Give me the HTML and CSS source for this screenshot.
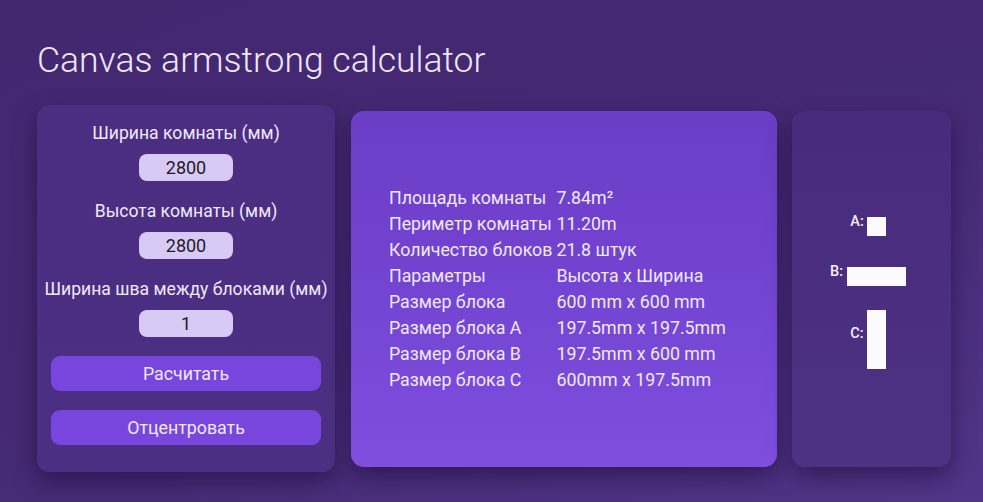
FILE: index.html
```html
<!DOCTYPE html>
<html lang="ru">
<head>
<meta charset="utf-8">
<title>Canvas armstrong calculator</title>
<link rel="stylesheet" href="styles.css">
</head>
<body>
<div class="page">
  <h1 class="title">Canvas armstrong calculator</h1>
  <div class="row">
    <div class="card form-card">
      <div class="label">Ширина комнаты (мм)</div>
      <input class="field" type="text" value="2800">
      <div class="label">Высота комнаты (мм)</div>
      <input class="field" type="text" value="2800">
      <div class="label">Ширина шва между блоками (мм)</div>
      <input class="field field-last" type="text" value="1">
      <button class="btn">Расчитать</button>
      <button class="btn btn-second">Отцентровать</button>
    </div>
    <div class="card result-card">
      <div class="results">
        <div class="cell">Площадь комнаты</div><div class="cell">7.84m²</div>
        <div class="cell">Периметр комнаты</div><div class="cell">11.20m</div>
        <div class="cell">Количество блоков</div><div class="cell">21.8 штук</div>
        <div class="cell">Параметры</div><div class="cell">Высота х Ширина</div>
        <div class="cell">Размер блока</div><div class="cell">600 mm x 600 mm</div>
        <div class="cell">Размер блока А</div><div class="cell">197.5mm x 197.5mm</div>
        <div class="cell">Размер блока В</div><div class="cell">197.5mm x 600 mm</div>
        <div class="cell">Размер блока С</div><div class="cell">600mm x 197.5mm</div>
      </div>
    </div>
    <div class="card preview-card">
      <div class="piece piece-a"><span class="piece-label">A:</span><span class="block block-a"></span></div>
      <div class="piece piece-b"><span class="piece-label">B:</span><span class="block block-b"></span></div>
      <div class="piece piece-c"><span class="piece-label">C:</span><span class="block block-c"></span></div>
    </div>
  </div>
</div>
</body>
</html>
```
FILE: styles.css
```css
html, body {
  margin: 0;
  padding: 0;
}
body {
  min-height: 502px;
  background: linear-gradient(160deg, #432870 0%, #452a74 55%, #513588 100%);
  font-family: Roboto, "Liberation Sans", sans-serif;
  color: #ede6fb;
  overflow: hidden;
}
.page {
  padding: 0 32px 0 37px;
}
.title {
  margin: 41px 0 26px 0;
  font-size: 35.5px;
  line-height: 38px;
  font-weight: 300;
  color: #eee8fa;
  letter-spacing: 0;
}
.row {
  display: flex;
  align-items: center;
}
.card {
  border-radius: 13px;
  box-shadow: 0 10px 22px rgba(22, 8, 52, 0.5);
  box-sizing: border-box;
}
.form-card {
  width: 298px;
  padding: 18px 14px 27px 14px;
  background: linear-gradient(180deg, #4b2e81 0%, #4b2f82 100%);
  display: flex;
  flex-direction: column;
  align-items: center;
}
.label {
  font-size: 17.6px;
  line-height: 20px;
  margin-bottom: 11px;
  color: #efe9fb;
  white-space: nowrap;
}
.field {
  width: 94px;
  height: 27px;
  box-sizing: border-box;
  border: none;
  border-radius: 8px;
  background: #d9c9f5;
  text-align: center;
  font-family: Roboto, "Liberation Sans", sans-serif;
  font-size: 18px;
  color: #1e1b26;
  margin: 0 0 20px 0;
  padding: 0;
  outline: none;
}
.field-last {
  margin-bottom: 19px;
}
.btn {
  width: 270px;
  height: 35px;
  border: none;
  border-radius: 9px;
  background: #7946dd;
  color: #efe8fc;
  font-family: Roboto, "Liberation Sans", sans-serif;
  font-size: 17.8px;
  padding: 0;
  margin: 0;
}
.btn-second {
  margin-top: 19px;
}
.result-card {
  width: 426px;
  height: 356px;
  margin-left: 16px;
  background: linear-gradient(180deg, #6c3dc5 0%, #7444d2 50%, #7f4edf 100%);
  display: flex;
  align-items: center;
  padding-left: 38px;
}
.results {
  display: grid;
  grid-template-columns: auto auto;
  column-gap: 4px;
  font-size: 17.8px;
  line-height: 26px;
  color: #efe9fc;
}
.cell {
  white-space: nowrap;
}
.preview-card {
  width: 159px;
  height: 356px;
  margin-left: 15px;
  background: linear-gradient(180deg, #482b7c 0%, #4d3183 100%);
  display: flex;
  flex-direction: column;
  align-items: center;
  justify-content: center;
  padding: 6px 7px 0 0;
}
.piece {
  display: flex;
  align-items: center;
  gap: 3px;
}
.piece-b {
  margin-top: 26px;
  gap: 4px;
}
.piece-c {
  margin-top: 21px;
}
.piece-label {
  font-size: 14.5px;
  line-height: 14px;
  font-weight: 500;
  color: #f4f0fc;
  margin-bottom: 10px;
}
.block {
  display: block;
  background: #fbfafd;
}
.block-a {
  width: 19px;
  height: 19px;
}
.block-b {
  width: 59px;
  height: 19px;
}
.block-c {
  width: 19px;
  height: 59px;
}
```
